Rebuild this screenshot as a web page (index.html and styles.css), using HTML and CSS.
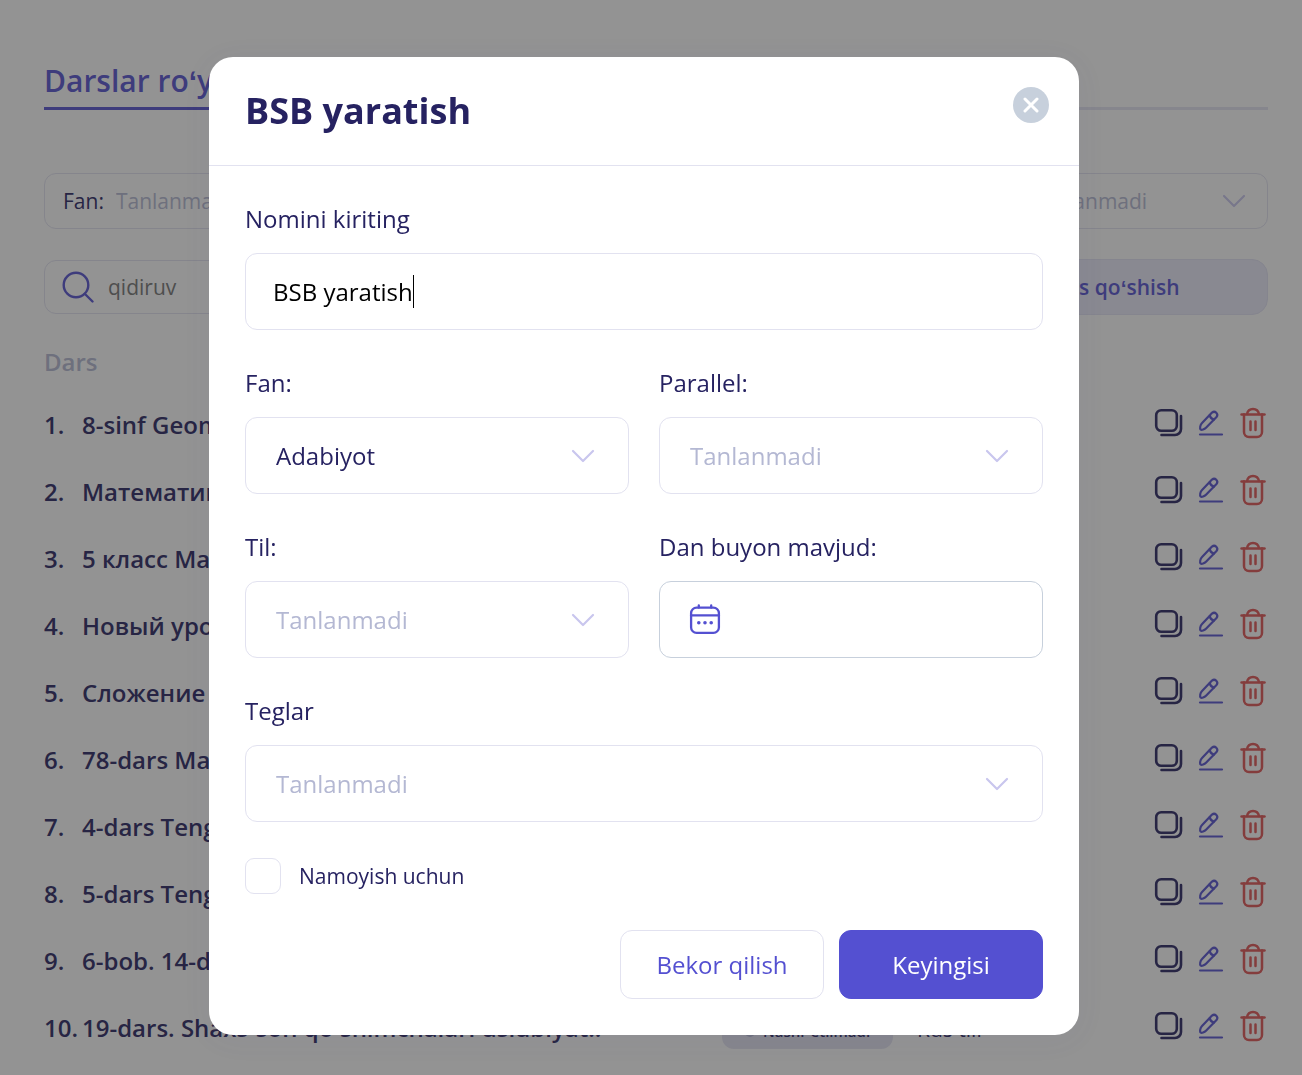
FILE: index.html
```html
<!DOCTYPE html>
<html lang="uz">
<head>
    <meta charset="UTF-8">
    <meta name="viewport" content="width=device-width, initial-scale=1.0">
    <title>Darslar roʻyxati</title>
    <link rel="stylesheet" href="styles.css">
</head>
<body>

<!-- icons used more than once -->
<svg class="sprite" aria-hidden="true">
    <symbol id="chevron" viewBox="0 0 24 14">
        <path d="M2 2l10 10L22 2" fill="none" stroke="currentColor" stroke-width="2.2" stroke-linecap="round" stroke-linejoin="round"/>
    </symbol>
    <symbol id="copy" viewBox="0 0 30 30">
        <g fill="none" stroke="currentColor" stroke-width="2.6" stroke-linecap="round">
            <rect x="2.2" y="2.2" width="20.6" height="20.6" rx="5"/>
            <path d="M27 8v13a6 6 0 0 1-6 6H7.5"/>
        </g>
    </symbol>
    <symbol id="edit" viewBox="0 0 28 28">
        <g fill="none" stroke="currentColor" stroke-width="2.2" stroke-linecap="round" stroke-linejoin="round">
            <path d="M2 25.500h22"/>
            <path d="M2.600 20.500c-1-1-.4-4.600 1.200-6.200L14 3.600a3.200 3.200 0 0 1 4.500 4.500L8 18.800C6.400 20.400 3.600 21.300 2.600 20.500z"/>
            <path d="M11.800 6.200c.4 2.400 1.900 3.900 4.200 4.300"/>
        </g>
    </symbol>
    <symbol id="trash" viewBox="0 0 26 32">
        <g fill="none" stroke="currentColor" stroke-width="2.5" stroke-linecap="round" stroke-linejoin="round">
            <path d="M1.500 7.500h23"/>
            <path d="M4 7.500V25a5 5 0 0 0 5 5h8a5 5 0 0 0 5-5V7.500"/>
            <path d="M7 7c.6-3 3-5 6-5s5.400 2 6 5"/>
            <path d="M10.500 14.500v8.500M15.500 14.500v8.500"/>
        </g>
    </symbol>
</svg>

<main class="page">
    <nav class="tabs">
        <a class="tab" href="#">Darslar roʻyxati</a>
    </nav>

    <div class="filters">
        <label class="filter">
            <span class="filter-name">Fan:</span>
            <select class="filter-select"><option>Tanlanmadi</option></select>
            <svg class="chevron"><use href="#chevron"/></svg>
        </label>
        <label class="filter">
            <span class="filter-name">Sinf:</span>
            <select class="filter-select"><option>Tanlanmadi</option></select>
            <svg class="chevron"><use href="#chevron"/></svg>
        </label>
        <label class="filter">
            <span class="filter-name">Chorak:</span>
            <select class="filter-select"><option>Tanlanmadi</option></select>
            <svg class="chevron"><use href="#chevron"/></svg>
        </label>
        <label class="filter">
            <span class="filter-name">Til:</span>
            <select class="filter-select"><option>Tanlanmadi</option></select>
            <svg class="chevron"><use href="#chevron"/></svg>
        </label>
    </div>

    <div class="toolbar">
        <div class="search">
            <svg class="search-icon" viewBox="0 0 32 32" fill="none" stroke="currentColor" stroke-width="2.4" stroke-linecap="round">
                <circle cx="14" cy="14" r="12.3"/>
                <path d="M23 23l7.500 7.500"/>
            </svg>
            <input class="search-input" type="search" placeholder="qidiruv" aria-label="qidiruv">
        </div>
        <button class="add-button" type="button">Dars qoʻshish</button>
    </div>

    <table class="lessons">
        <thead>
            <tr>
                <th class="col-number">Dars</th>
                <th class="col-title"></th>
                <th class="col-status"></th>
                <th class="col-lang"></th>
                <th class="col-actions"></th>
            </tr>
        </thead>
        <tbody id="lessonRows"></tbody>
    </table>
</main>

<div class="overlay">
    <form class="modal" role="dialog" aria-labelledby="modalTitle">
        <header class="modal-header">
            <h2 class="modal-title" id="modalTitle">BSB yaratish</h2>
            <button class="close-button" type="button" aria-label="Yopish">
                <svg class="close-icon" viewBox="0 0 16 16" fill="none" stroke="currentColor" stroke-width="3" stroke-linecap="round">
                    <path d="M2 2l12 12M14 2L2 14"/>
                </svg>
            </button>
        </header>

        <div class="modal-body">
            <div class="field field-wide">
                <label class="field-label" for="name">Nomini kiriting</label>
                <div class="control control-text">
                    <input class="text-input" type="text" id="name" name="name" value="BSB yaratish">
                    <span class="caret"></span>
                </div>
            </div>

            <div class="field">
                <label class="field-label" for="subject">Fan:</label>
                <div class="control">
                    <select class="select" id="subject" name="subject">
                        <option>Adabiyot</option>
                    </select>
                    <svg class="chevron"><use href="#chevron"/></svg>
                </div>
            </div>

            <div class="field">
                <label class="field-label" for="parallel">Parallel:</label>
                <div class="control">
                    <select class="select empty" id="parallel" name="parallel">
                        <option>Tanlanmadi</option>
                    </select>
                    <svg class="chevron"><use href="#chevron"/></svg>
                </div>
            </div>

            <div class="field">
                <label class="field-label" for="language">Til:</label>
                <div class="control">
                    <select class="select empty" id="language" name="language">
                        <option>Tanlanmadi</option>
                    </select>
                    <svg class="chevron"><use href="#chevron"/></svg>
                </div>
            </div>

            <div class="field">
                <label class="field-label" for="availableFrom">Dan buyon mavjud:</label>
                <div class="control control-date">
                    <svg class="calendar-icon" viewBox="0 0 32 32" fill="none" stroke="currentColor" stroke-width="2.3" stroke-linecap="round">
                        <rect x="2.100" y="3.600" width="27.800" height="25.300" rx="5.5"/>
                        <path d="M2 11.300h28M9.800 1.500v2M22.200 1.500v2"/>
                        <g fill="currentColor" stroke="none">
                            <circle cx="9.800" cy="18.800" r="1.8"/>
                            <circle cx="16" cy="18.800" r="1.8"/>
                            <circle cx="22.200" cy="18.800" r="1.8"/>
                        </g>
                    </svg>
                    <input class="date-input" type="text" id="availableFrom" name="availableFrom">
                </div>
            </div>

            <div class="field field-wide">
                <label class="field-label" for="tags">Teglar</label>
                <div class="control">
                    <select class="select empty" id="tags" name="tags">
                        <option>Tanlanmadi</option>
                    </select>
                    <svg class="chevron"><use href="#chevron"/></svg>
                </div>
            </div>
        </div>

        <div class="demo">
            <input class="checkbox" type="checkbox" id="demo" name="demo">
            <label class="demo-label" for="demo">Namoyish uchun</label>
        </div>

        <div class="modal-actions">
            <button class="button" type="button">Bekor qilish</button>
            <button class="button button-primary" type="submit">Keyingisi</button>
        </div>
    </form>
</div>

<script src="script.js"></script>
</body>
</html>
```

FILE: styles.css
```css
* {
    box-sizing: border-box;
}
body {
    margin: 0;
    overflow: hidden;
    color: #262261;
    background-color: #ffffff;
    font-family: "Open Sans", sans-serif;
    font-size: 24px;
    line-height: 33px;
}
input, select, button {
    margin: 0;
    padding: 0;
    border: none;
    outline: none;
    background: none;
    color: inherit;
    font: inherit;
}
select {
    appearance: none;
}
.sprite {
    display: none;
}
.chevron {
    flex: none;
    width: 24px;
    height: 14px;
    color: #c9c6ee;
    pointer-events: none;
}

/* lessons page */
.page {
    padding: 60px 34px 0 44px;
}
.tabs {
    display: flex;
    border-bottom: 3px solid #e4e4f2;
}
.tab {
    margin-bottom: -3px;
    padding-bottom: 5px;
    border-bottom: 3px solid #5450d1;
    color: #5450d1;
    font-size: 30px;
    line-height: 42px;
    font-weight: 600;
    text-decoration: none;
}
.filters {
    display: grid;
    grid-template-columns: repeat(4, minmax(0, 1fr));
    gap: 15px;
    margin-top: 63px;
}
.filter {
    display: flex;
    align-items: center;
    gap: 12px;
    height: 56px;
    padding: 0 21px 0 18px;
    border: 1px solid #e2e2f0;
    border-radius: 12px;
    font-size: 21px;
}
.filter-select {
    flex: 1;
    min-width: 0;
    color: #b4b8d3;
}
.toolbar {
    display: flex;
    align-items: center;
    justify-content: space-between;
    gap: 30px;
    margin-top: 30px;
    font-size: 21px;
}
.search {
    display: flex;
    flex: 1;
    align-items: center;
    gap: 14px;
    height: 54px;
    padding: 0 17px;
    border: 1px solid #e2e2f0;
    border-radius: 12px;
}
.search-icon {
    width: 32px;
    height: 32px;
    color: #5450d1;
}
.search-input {
    flex: 1;
}
.search-input::placeholder {
    color: #757575;
}
.add-button {
    width: 314px;
    height: 56px;
    border: 1px solid #e2e2f4;
    border-radius: 16px;
    background-color: #eaeafa;
    color: #5450d1;
    font-weight: 600;
}
.lessons {
    width: 100%;
    margin-top: 16px;
    border-collapse: collapse;
    table-layout: fixed;
    font-weight: 600;
}
.lessons th {
    height: 60px;
    padding: 0;
    color: #b4b8d3;
    font-weight: 600;
    text-align: left;
}
.lessons td {
    height: 67px;
    padding: 0;
    white-space: nowrap;
}
.col-number {
    width: 38px;
}
.col-status {
    width: 195px;
}
.col-lang {
    width: 237px;
}
.col-actions {
    width: 114px;
}
.lesson-title {
    overflow: hidden;
    text-overflow: ellipsis;
}
.status {
    display: flex;
    align-items: center;
    justify-content: center;
    gap: 8px;
    width: 171px;
    padding: 9px 0 1px;
    border-radius: 12px;
    background-color: #e4e4f2;
    font-size: 15px;
    font-weight: 600;
}
.status-icon {
    width: 10px;
    height: 10px;
    border-radius: 5px;
    background-color: #b4b8d3;
}
.lessons .lesson-lang {
    padding-top: 3px;
    font-size: 21px;
    font-weight: 400;
}
.actions {
    display: flex;
    align-items: center;
    justify-content: space-between;
    padding: 0 2px 4px 0;
}
.action {
    display: flex;
}
.icon-copy {
    width: 30px;
    height: 30px;
    color: #262261;
}
.icon-edit {
    width: 28px;
    height: 28px;
    color: #5450d1;
}
.icon-trash {
    width: 26px;
    height: 32px;
    color: #e05252;
}

/* modal window */
.overlay {
    position: fixed;
    inset: 0;
    display: flex;
    align-items: flex-start;
    justify-content: center;
    padding: 57px 14px 0 0;
    background-color: rgba(40, 40, 40, 0.5);
}
.modal {
    width: 100%;
    max-width: 870px;
    border-radius: 24px;
    background-color: #ffffff;
    box-shadow: 0 4px 30px rgba(84, 80, 160, 0.06);
}
.modal-header {
    display: flex;
    align-items: flex-start;
    justify-content: space-between;
    padding: 30px 30px 30px 36px;
    border-bottom: 1px solid #e2e2f0;
}
.modal-title {
    margin: 0;
    font-size: 36px;
    line-height: 48px;
    font-weight: 700;
}
.close-button {
    display: flex;
    align-items: center;
    justify-content: center;
    width: 36px;
    height: 36px;
    border-radius: 18px;
    background-color: #c7d0dc;
    color: #ffffff;
}
.close-icon {
    width: 16px;
    height: 16px;
}
.modal-body {
    display: grid;
    grid-template-columns: repeat(2, minmax(0, 1fr));
    gap: 36px 30px;
    padding: 36px;
}
.field-wide {
    grid-column: span 2;
}
.field-label {
    display: block;
    margin-bottom: 18px;
}
.control {
    position: relative;
    height: 77px;
    border: 1px solid #e2e2f0;
    border-radius: 12px;
}
.control .chevron {
    position: absolute;
    top: 31px;
    right: 33px;
}
.select {
    width: 100%;
    height: 100%;
    padding: 0 60px 0 30px;
}
.select.empty {
    color: #b4b8d3;
}
.control-text {
    display: flex;
    align-items: center;
    padding: 0 27px;
}
.text-input {
    field-sizing: content;
    color: #000000;
}
.caret {
    width: 1px;
    height: 33px;
    background-color: #000000;
}
.control-date {
    display: flex;
    align-items: center;
    gap: 14px;
    padding: 0 29px;
    border-color: #c7d0dc;
}
.calendar-icon {
    flex: none;
    width: 32px;
    height: 32px;
    color: #5450d1;
}
.date-input {
    flex: 1;
    min-width: 0;
}
.demo {
    display: flex;
    align-items: center;
    gap: 18px;
    padding: 0 36px;
    font-size: 21px;
}
.checkbox {
    appearance: none;
    width: 36px;
    height: 36px;
    border: 1px solid #e2e2f0;
    border-radius: 9px;
}
.checkbox:checked {
    background-color: #5450d1;
}
.modal-actions {
    display: flex;
    justify-content: flex-end;
    gap: 15px;
    padding: 36px;
}
.button {
    width: 204px;
    height: 69px;
    border: 1px solid #e2e2f0;
    border-radius: 12px;
    color: #5450d1;
}
.button-primary {
    border-color: #5450d1;
    background-color: #5450d1;
    color: #ffffff;
}
```

FILE: script.js
```js
const lessons = [
    '8-sinf Geometriya',
    'Математика',
    '5 класс Математика',
    'Новый урок',
    'Сложение',
    '78-dars Matematika',
    '4-dars Tenglama',
    '5-dars Tenglama',
    '6-bob. 14-dars',
    '19-dars. Shaxs-son qoʻshimchalari uslubiyat..'
];

document.getElementById('lessonRows').innerHTML = lessons.map((title, i) => `
    <tr>
        <td>${i + 1}.</td>
        <td class="lesson-title">${title}</td>
        <td><span class="status"><i class="status-icon"></i>Nashr etilmadi</span></td>
        <td class="lesson-lang">Rus tili</td>
        <td>
            <div class="actions">
                <button class="action" type="button" aria-label="Nusxalash"><svg class="icon-copy"><use href="#copy"/></svg></button>
                <button class="action" type="button" aria-label="Tahrirlash"><svg class="icon-edit"><use href="#edit"/></svg></button>
                <button class="action" type="button" aria-label="Oʻchirish"><svg class="icon-trash"><use href="#trash"/></svg></button>
            </div>
        </td>
    </tr>
`).join('');
```
